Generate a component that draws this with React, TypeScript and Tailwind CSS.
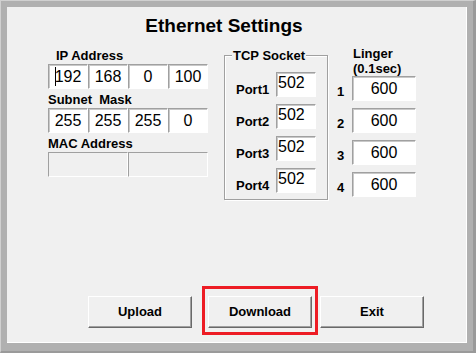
import React from "react";

const sunken =
  "border border-t-[#a0a0a0] border-l-[#a0a0a0] border-b-white border-r-white shadow-[inset_1px_1px_0_#c8c8c8] bg-white";

function Box({ w, value, align = "center", cursor = false, disabled = false }: { w: string; value?: string; align?: "center" | "left"; cursor?: boolean; disabled?: boolean }) {
  return (
    <div
      className={`relative h-[25px] ${w} ${
        disabled
          ? "border border-t-[#a0a0a0] border-l-[#a0a0a0] border-b-white border-r-white bg-[#f0f0f0]"
          : sunken
      } flex ${align === "center" ? "items-center justify-center" : "items-start justify-start pl-[1px] pt-[0px]"} text-[16px] font-normal leading-[19px] text-black`}
    >
      {cursor && <span className="absolute left-[6px] top-[2px] h-[19px] w-[1px] bg-black" />}
      {value}
    </div>
  );
}

function Button({ label }: { label: string }) {
  return (
    <div className="flex h-[32px] w-[104px] items-center justify-center border border-t-white border-l-white border-b-[#696969] border-r-[#696969] bg-[#f0f0f0] text-[13px] font-bold text-black shadow-[inset_-1px_-1px_0_#a0a0a0]">
      {label}
    </div>
  );
}

export default function App() {
  const ip = ["192", "168", "0", "100"];
  const mask = ["255", "255", "255", "0"];
  return (
    <div
      className="h-[353px] w-[476px] border-l border-t border-l-[#d0d0d0] border-t-[#d0d0d0] border-r-[3px] border-b-[2px] border-r-[#9a9a9a] border-b-[#9a9a9a] bg-[#b0b0b0] pl-[6px] pt-[6px]"
      style={{ fontFamily: '"Liberation Sans", Arial, sans-serif' }}
    >
      <div className="flex h-[336px] w-[460px] flex-col border-b border-r border-b-white border-r-white bg-[#f0f0f0] pt-[8px] pb-[7px]">
        <div className="ml-[41px] w-[352px] text-center text-[19px] font-bold leading-[22px] text-black">
          Ethernet Settings
        </div>

        <div className="mt-[9px] flex items-start">
          {/* left column */}
          <div className="ml-[41px] mt-[2px] flex w-[160px] flex-col text-[13px] font-bold leading-[15px] text-black">
            <div className="ml-[8px]">IP Address</div>
            <div className="mt-[1px] flex">
              {ip.map((v, i) => (
                <Box key={i} w="w-[40px]" value={v} cursor={i === 0} />
              ))}
            </div>
            <div className="mt-[3px] whitespace-pre">Subnet  Mask</div>
            <div className="mt-[1px] flex">
              {mask.map((v, i) => (
                <Box key={i} w="w-[40px]" value={v} />
              ))}
            </div>
            <div className="mt-[3px]">MAC Address</div>
            <div className="mt-[1px] flex">
              <Box w="w-[80px]" disabled />
              <Box w="w-[80px]" disabled />
            </div>
          </div>

          {/* TCP socket group */}
          <div className="relative ml-[16px] mt-[9px] h-[145px] w-[104px] border border-[#a0a0a0] pl-[11px] pt-[16px] shadow-[inset_1px_1px_0_#ffffff,1px_1px_0_#ffffff]">
            <div className="absolute -top-[8px] left-[7px] bg-[#f0f0f0] px-[1px] text-[13px] font-bold leading-[15px] text-black">
              TCP Socket
            </div>
            <div className="flex flex-col gap-[7px]">
              {[1, 2, 3, 4].map((n) => (
                <div key={n} className="flex items-end">
                  <div className="w-[40px] text-[13px] font-bold leading-[15px] text-black">Port{n}</div>
                  <Box w="w-[40px]" value="502" align="left" />
                </div>
              ))}
            </div>
          </div>

          {/* Linger */}
          <div className="ml-[8px] flex flex-col text-[13px] font-bold leading-[15px] text-black">
            <div className="ml-[17px]">Linger</div>
            <div className="ml-[17px]">(0.1sec)</div>
            <div className="flex flex-col gap-[7px]">
              {[1, 2, 3, 4].map((n) => (
                <div key={n} className="flex items-end">
                  <div className="mb-[2px] w-[16px] pl-[1px]">{n}</div>
                  <Box w="w-[64px]" value="600" />
                </div>
              ))}
            </div>
          </div>
        </div>

        <div className="mt-auto flex items-start pl-[81px]">
          <div className="mt-[10px]">
            <Button label="Upload" />
          </div>
          <div className="ml-[10px] border-[3px] border-[#ed1c24] px-[3px] pt-[7px] pb-[4px]">
            <Button label="Download" />
          </div>
          <div className="ml-[2px] mt-[10px]">
            <Button label="Exit" />
          </div>
        </div>
      </div>
    </div>
  );
}
